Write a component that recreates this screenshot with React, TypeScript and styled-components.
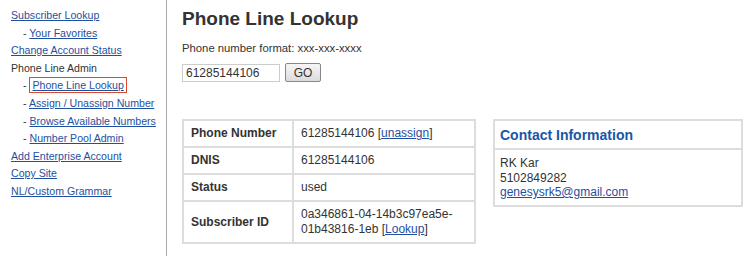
import React from "react";
import styled, { createGlobalStyle } from "styled-components";

const GlobalStyle = createGlobalStyle`
    body {
        margin: 0;
        background: #fff;
        font-family: "Liberation Sans", Arial, sans-serif;
        color: #333;
    }
`;

const Page = styled.div`
    display: flex;
    height: 256px;
`;

const Sidebar = styled.nav`
    width: 155px;
    padding: 7px 0 0 11px;
    border-right: 1px solid #aaa;
    flex-shrink: 0;
`;

const NavItem = styled.div<{ $indent?: boolean }>`
    font-size: 10.6px;
    line-height: 17.6px;
    padding-left: ${(p) => (p.$indent ? "12px" : "0")};
    white-space: nowrap;
`;

const NavLink = styled.a<{ $active?: boolean }>`
    color: #1f4f9f;
    text-decoration: underline;
    padding: ${(p) => (p.$active ? "1px 2px" : "0")};
    border: ${(p) => (p.$active ? "1px solid #e0482e" : "none")};
`;

const Main = styled.main`
    flex: 1;
    padding: 7px 0 0 15px;
`;

const Title = styled.h1`
    margin: 0;
    font-size: 19px;
    font-weight: bold;
    color: #333;
    line-height: 24px;
`;

const Hint = styled.p`
    margin: 10px 0 8px;
    font-size: 11.3px;
    line-height: 14px;
`;

const SearchRow = styled.div`
    display: flex;
    align-items: center;
    gap: 5px;
`;

const Input = styled.input`
    width: 90px;
    height: 16px;
    padding: 0 3px;
    border: 1px solid #ccc;
    font-family: "Liberation Sans", Arial, sans-serif;
    font-size: 12px;
    color: #333;
`;

const GoButton = styled.button`
    width: 36px;
    height: 19px;
    padding: 0;
    border: 1px solid #888;
    border-radius: 2px;
    background: linear-gradient(#f6f6f6, #dcdcdc);
    font-family: "Liberation Sans", Arial, sans-serif;
    font-size: 12px;
    color: #333;
`;

const Panels = styled.div`
    display: flex;
    align-items: flex-start;
    gap: 17px;
    margin-top: 37px;
`;

const InfoTable = styled.table`
    border-collapse: collapse;
    border: 2px solid #ddd;
    font-size: 12px;
    width: 294px;
`;

const HeadCell = styled.th`
    text-align: left;
    font-weight: bold;
    padding: 5px 7px;
    border: 2px solid #ddd;
    width: 94px;
    line-height: 15px;
`;

const Cell = styled.td`
    padding: 5px 7px;
    border: 2px solid #ddd;
    line-height: 15px;
`;

const Link = styled.a`
    color: #1f4f9f;
    text-decoration: underline;
`;

const ContactBox = styled.section`
    width: 246px;
    border: 2px solid #ddd;
`;

const ContactHead = styled.h2`
    margin: 0;
    padding: 5px 5px 4px;
    font-size: 14px;
    line-height: 18px;
    color: #1a56a8;
    border-bottom: 2px solid #ddd;
`;

const ContactBody = styled.div`
    padding: 6px 5px 5px;
    font-size: 12px;
    line-height: 14.5px;
`;

const rows: [string, React.ReactNode][] = [
    ["Phone Number", <>61285144106 [<Link href="#">unassign</Link>]</>],
    ["DNIS", "61285144106"],
    ["Status", "used"],
    [
        "Subscriber ID",
        <>
            0a346861-04-14b3c97ea5e-
            <br />
            01b43816-1eb [<Link href="#">Lookup</Link>]
        </>,
    ],
];

const App: React.FC = () => {
    return (
        <>
            <GlobalStyle />
            <Page>
                <Sidebar>
                    <NavItem><NavLink href="#">Subscriber Lookup</NavLink></NavItem>
                    <NavItem $indent>- <NavLink href="#">Your Favorites</NavLink></NavItem>
                    <NavItem><NavLink href="#">Change Account Status</NavLink></NavItem>
                    <NavItem>Phone Line Admin</NavItem>
                    <NavItem $indent>- <NavLink href="#" $active>Phone Line Lookup</NavLink></NavItem>
                    <NavItem $indent>- <NavLink href="#">Assign / Unassign Number</NavLink></NavItem>
                    <NavItem $indent>- <NavLink href="#">Browse Available Numbers</NavLink></NavItem>
                    <NavItem $indent>- <NavLink href="#">Number Pool Admin</NavLink></NavItem>
                    <NavItem><NavLink href="#">Add Enterprise Account</NavLink></NavItem>
                    <NavItem><NavLink href="#">Copy Site</NavLink></NavItem>
                    <NavItem><NavLink href="#">NL/Custom Grammar</NavLink></NavItem>
                </Sidebar>
                <Main>
                    <Title>Phone Line Lookup</Title>
                    <Hint>Phone number format: xxx-xxx-xxxx</Hint>
                    <SearchRow>
                        <Input defaultValue="61285144106" />
                        <GoButton>GO</GoButton>
                    </SearchRow>
                    <Panels>
                        <InfoTable>
                            <tbody>
                                {rows.map(([label, value]) => (
                                    <tr key={label}>
                                        <HeadCell>{label}</HeadCell>
                                        <Cell>{value}</Cell>
                                    </tr>
                                ))}
                            </tbody>
                        </InfoTable>
                        <ContactBox>
                            <ContactHead>Contact Information</ContactHead>
                            <ContactBody>
                                RK Kar
                                <br />
                                5102849282
                                <br />
                                <Link href="#">genesysrk5@gmail.com</Link>
                            </ContactBody>
                        </ContactBox>
                    </Panels>
                </Main>
            </Page>
        </>
    );
};

export default App;
